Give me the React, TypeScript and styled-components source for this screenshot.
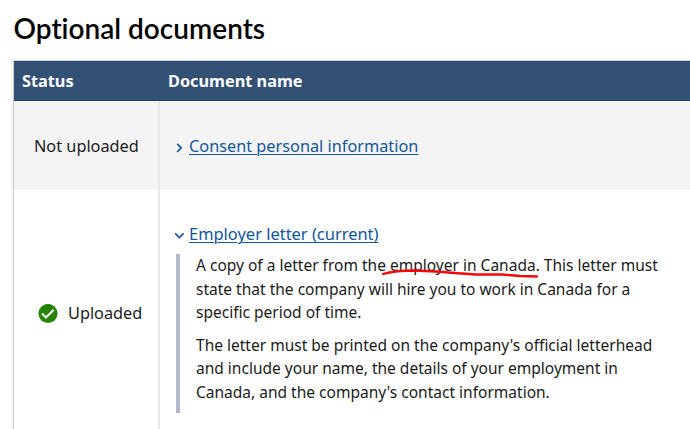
import React from "react";
import styled, { createGlobalStyle } from "styled-components";

const GlobalStyle = createGlobalStyle`
  * { box-sizing: border-box; }
  body { margin: 0; background: #fff; overflow: hidden; }
`;

const Page = styled.main`
  width: 690px;
  height: 429px;
  overflow: hidden;
  padding: 11px 0 0 13px;
  background: #fff;
  color: #1b1b1b;
  font: 16.3px/23.5px "Noto Sans", sans-serif;
`;

const Title = styled.h1`
  margin: 0 0 15px;
  padding-left: 0.5px;
  color: #000;
  font: 600 28px/34px Lato, sans-serif;
  font-variant-ligatures: none;
  white-space: nowrap;
`;

const Table = styled.section`
  border-left: 1px solid #ccc;
  border-top: 1px solid #d3d8df;
  box-shadow: -1px 0 2px rgba(0, 0, 0, 0.08);
`;

const Row = styled.div<{ $height: number; $shaded?: boolean }>`
  display: grid;
  grid-template-columns: 146px 1fr;
  height: ${(p) => p.$height}px;
  background: ${(p) => (p.$shaded ? "#f4f4f4" : "#fff")};
`;

const HeaderRow = styled(Row)`
  align-items: center;
  background: #335075;
  border-top: 1px solid #25456e;
  border-bottom: 1px solid #1c3c6a;
  color: #fff;
  font-weight: 700;
`;

const HeaderCell = styled.div`
  padding: 1px 0 0 8px;
  white-space: nowrap;
`;

const StatusCell = styled.div<{ $indent: number; $drop?: number }>`
  display: flex;
  align-items: center;
  gap: 10px;
  padding-top: ${(p) => p.$drop ?? 0}px;
  padding-left: ${(p) => p.$indent}px;
  border-right: 2px solid #e8e8e8;
  white-space: nowrap;
`;

const NameCell = styled.div<{ $top: number }>`
  padding: ${(p) => p.$top}px 0 0 15px;
`;

const Summary = styled.div`
  display: flex;
  align-items: center;
  height: 24px;
`;

const Chevron = styled.svg`
  width: 12px;
  height: 12px;
  margin: 2px 2px 0 0;
  fill: none;
  stroke: #20579b;
  stroke-width: 1.7;
`;

const DocLink = styled.a<{ $size?: number }>`
  color: #12569f;
  font-size: ${(p) => p.$size ?? 16.3}px;
  text-decoration: underline;
  text-decoration-thickness: 1px;
  text-underline-offset: 2px;
  white-space: nowrap;
`;

const Details = styled.div`
  margin: 8px 0 0 1px;
  height: 159px;
  border-left: 4px solid #b2b8c8;
  padding-left: 16px;
  font-size: 15.53px;
`;

const Paragraph = styled.p`
  margin: 0 0 9px;
`;

const Line = styled.span`
  display: block;
  white-space: nowrap;
`;

const Marked = styled.span`
  position: relative;
`;

const Stroke = styled.svg`
  position: absolute;
  left: -10px;
  top: 12px;
  width: 160px;
  height: 12px;
  overflow: visible;
  fill: none;
  stroke: #f90505;
  stroke-width: 2.3;
  stroke-linecap: round;
  stroke-linejoin: round;
`;

const CheckIcon = styled.svg`
  width: 20px;
  height: 20px;
`;

export default function App() {
  return (
    <>
      <GlobalStyle />
      <Page>
        <Title>Optional documents</Title>
        <Table>
          <HeaderRow $height={40}>
            <HeaderCell>Status</HeaderCell>
            <HeaderCell>Document name</HeaderCell>
          </HeaderRow>
          <Row $height={89} $shaded>
            <StatusCell $indent={20} $drop={2}>Not uploaded</StatusCell>
            <NameCell $top={34}>
              <Summary>
                <Chevron viewBox="0 0 12 12"><path d="M2.2 1.8L6.2 5.8L2.2 9.8" /></Chevron>
                <DocLink>Consent personal information</DocLink>
              </Summary>
            </NameCell>
          </Row>
          <Row $height={248}>
            <StatusCell $indent={24} $drop={0}>
              <CheckIcon viewBox="0 0 20 20">
                <circle cx="10" cy="9.5" r="9.6" fill="#278400" />
                <path d="M4 9.5l4 4 7.7-7.8" fill="none" stroke="#fff" strokeWidth="2" />
              </CheckIcon>
              Uploaded
            </StatusCell>
            <NameCell $top={32}>
              <Summary>
                <Chevron viewBox="0 0 12 12"><path d="M0.2 4.4L4.4 8.6L8.6 4.4" /></Chevron>
                <DocLink $size={16.45}>Employer letter (current)</DocLink>
              </Summary>
              <Details>
                <Paragraph>
                  <Line>
                    A copy of a letter from the{" "}
                    <Marked>
                      employer in Canada.
                      <Stroke viewBox="0 0 160 12">
                        <path d="M3 8C10 6 20 4.5 34 4.5L56 5.5L75 7L96 8.5H122L140 10L157 10.5" />
                      </Stroke>
                    </Marked>{" "}
                    This letter must
                  </Line>
                  <Line>state that the company will hire you to work in Canada for a</Line>
                  <Line>specific period of time.</Line>
                </Paragraph>
                <Paragraph>
                  <Line>The letter must be printed on the company's official letterhead</Line>
                  <Line>and include your name, the details of your employment in</Line>
                  <Line>Canada, and the company's contact information.</Line>
                </Paragraph>
              </Details>
            </NameCell>
          </Row>
        </Table>
      </Page>
    </>
  );
}
